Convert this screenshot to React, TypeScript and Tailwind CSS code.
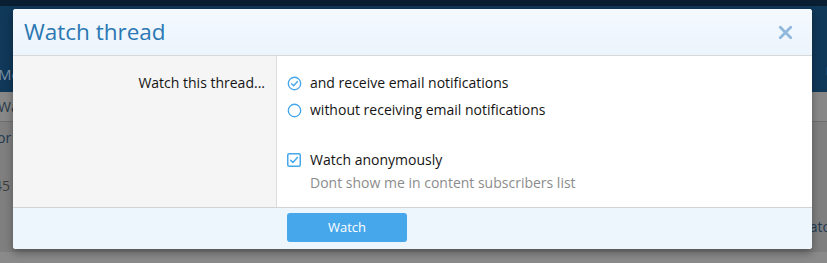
import { X } from "lucide-react";

function RadioChecked() {
  return (
    <svg width="15" height="15" viewBox="0 0 16 16" className="shrink-0">
      <circle cx="8" cy="8" r="6.6" fill="none" stroke="#47a7eb" strokeWidth="1.5" />
      <path d="M4.9 8.2 7.1 10.3 11.1 5.9" fill="none" stroke="#47a7eb" strokeWidth="1.5" strokeLinecap="round" strokeLinejoin="round" />
    </svg>
  );
}

function RadioEmpty() {
  return (
    <svg width="15" height="15" viewBox="0 0 16 16" className="shrink-0">
      <circle cx="8" cy="8" r="6.6" fill="none" stroke="#47a7eb" strokeWidth="1.5" />
    </svg>
  );
}

function CheckboxChecked() {
  return (
    <svg width="14" height="14" viewBox="0 0 14 14" className="shrink-0">
      <rect x="0.75" y="0.75" width="12.5" height="12.5" rx="1.5" fill="#fff" stroke="#47a7eb" strokeWidth="1.5" />
      <path d="M3.6 7.2 5.9 9.4 10.4 4.6" fill="none" stroke="#47a7eb" strokeWidth="1.5" strokeLinecap="round" strokeLinejoin="round" />
    </svg>
  );
}

export default function App() {
  return (
    <div className="relative h-[263px] w-[827px] overflow-hidden bg-[#7f7f7f] font-['Open_Sans',sans-serif]">
      {/* dimmed page behind the overlay */}
      <div className="flex h-full flex-col">
        <div className="h-[6px] bg-[#0a1e31]" />
        <div className="flex h-[86px] items-end justify-between bg-[#103859] pb-[6px] text-[15px] text-[#7d93a8]">
          <span className="-ml-[2px] mb-[1px]">Me</span>
          <span className="mb-[6px] mr-[-8px]">n</span>
        </div>
        <div className="flex h-[30px] items-center border-b border-[#6f6f6f] bg-[#888888] text-[14px] text-[#2c3b48]">
          <span className="-ml-[2px]">Wa</span>
        </div>
        <div className="flex h-[30px] items-center text-[14px] text-[#1f3a52]">
          <span className="-ml-[3px]">or</span>
        </div>
        <div className="flex h-[44px] items-end text-[14px] text-[#3d3d3d]">
          <span className="-ml-[6px]">45</span>
        </div>
        <div className="flex flex-1 items-start justify-end pt-[20px] text-[14px] text-[#1f3a52]">
          <span className="mr-[-4px]">ato</span>
        </div>
        <div className="h-[11px] bg-[#8a8a8a]" />
      </div>

      {/* modal */}
      <div className="absolute left-[13px] top-[9px] flex h-[240px] w-[799px] flex-col overflow-hidden rounded-[3px] bg-white shadow-[0_4px_8px_rgba(0,0,0,0.35)]">
        <div className="flex h-[47px] items-center justify-between border-b border-[#d8d8d8] bg-gradient-to-b from-[#f4f9fe] to-[#ecf4fc] pl-[11px] pr-[16px]">
          <h2 className="text-[22.5px] leading-none text-[#2b78b3]">Watch thread</h2>
          <X size={21} strokeWidth={3.2} className="text-[#8fb8dc]" />
        </div>
        <div className="flex flex-1">
          <div className="flex w-[264px] justify-end border-r border-[#dcdcdc] bg-[#f5f5f5] pr-[11px] pt-[17px]">
            <span className="text-[14px] leading-[20px] text-[#141414]">Watch this thread...</span>
          </div>
          <div className="flex flex-col pl-[10px] pt-[17px] text-[14px] leading-[20px] text-[#141414]">
            <label className="flex items-center gap-[8px]">
              <RadioChecked />
              <span>and receive email notifications</span>
            </label>
            <label className="mt-[7px] flex items-center gap-[8px]">
              <RadioEmpty />
              <span>without receiving email notifications</span>
            </label>
            <label className="mt-[30px] flex items-center gap-[9px]">
              <CheckboxChecked />
              <span>Watch anonymously</span>
            </label>
            <span className="ml-[23px] mt-[3px] text-[#8c8c8c]">Dont show me in content subscribers list</span>
          </div>
        </div>
        <div className="flex h-[42px] border-t border-[#d3d3d3] bg-[#edf5fd] pl-[274px] pt-[5px]">
          <button className="h-[29px] w-[120px] rounded-[3px] bg-[#47a7eb] text-[13px] text-white">Watch</button>
        </div>
      </div>
    </div>
  );
}
